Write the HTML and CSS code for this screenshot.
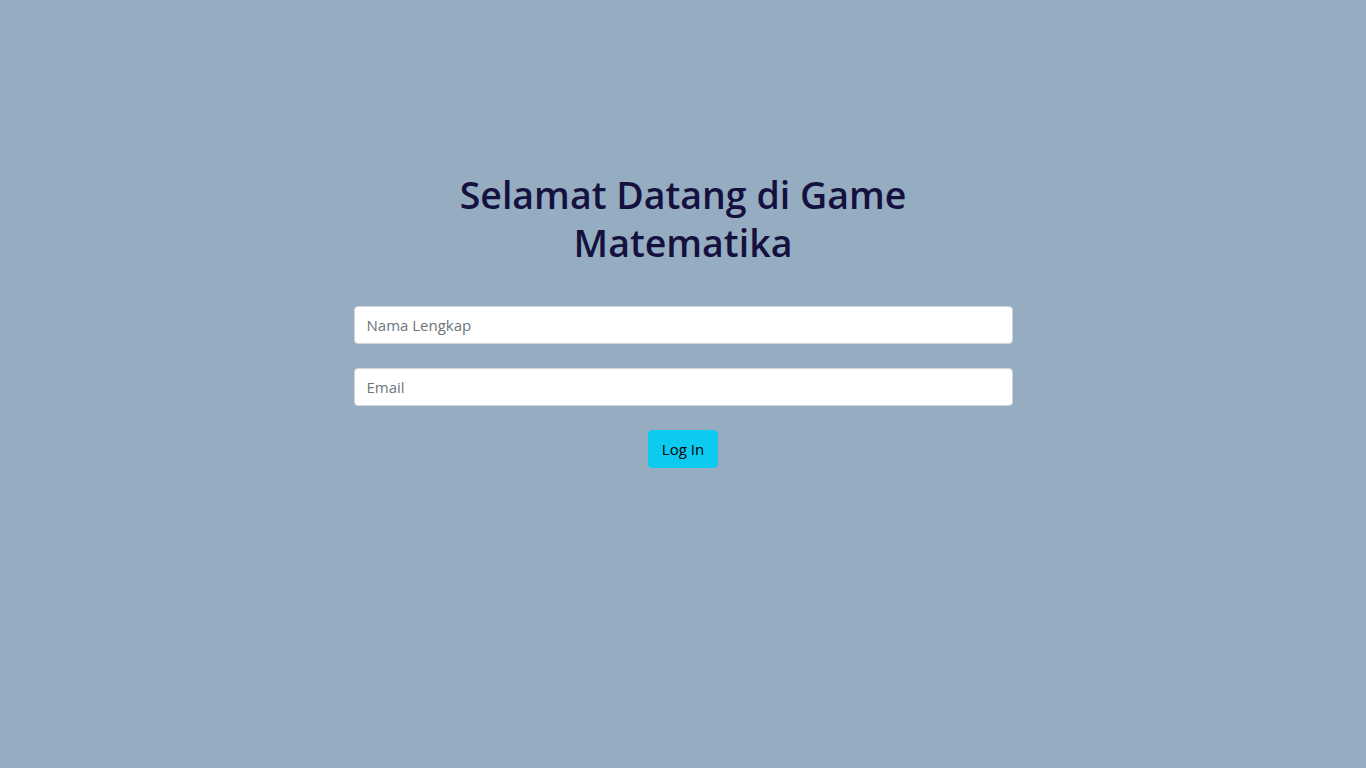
FILE: index.html
```html
<!DOCTYPE html>
<html lang="id">
<head>
<meta charset="utf-8">
<title>Game Matematika</title>
<link rel="stylesheet" href="styles.css">
</head>
<body>
<main class="page">
  <div class="panel">
    <h1 class="title">Selamat Datang di Game<br>Matematika</h1>
    <form class="form">
      <input class="field" type="text" placeholder="Nama Lengkap">
      <input class="field" type="email" placeholder="Email">
      <div class="actions">
        <button class="btn" type="button">Log In</button>
      </div>
    </form>
  </div>
</main>
</body>
</html>
```
FILE: styles.css
```css
* { box-sizing: border-box; }
html, body {
  margin: 0;
  height: 100%;
}
body {
  background: #96adc1;
  font-family: "Open Sans", "Noto Sans", sans-serif;
}
.page {
  display: flex;
  justify-content: center;
  padding-top: 171px;
}
.panel {
  width: 659px;
  display: flex;
  flex-direction: column;
  align-items: stretch;
}
.title {
  margin: 0 0 39px;
  text-align: center;
  font-size: 37.5px;
  font-weight: 600;
  line-height: 48px;
  color: #15113f;
}
.form {
  display: flex;
  flex-direction: column;
  gap: 24px;
}
.field {
  display: block;
  width: 100%;
  height: 38px;
  padding: 6px 12px;
  font-family: inherit;
  font-size: 15px;
  line-height: 24px;
  color: #212529;
  background: #fff;
  border: 1px solid #ced4da;
  border-radius: 4px;
  outline: none;
}
.field::placeholder { color: #6c757d; }
.actions {
  display: flex;
  justify-content: center;
}
.btn {
  height: 38px;
  padding: 6px 13px;
  font-family: inherit;
  font-size: 15px;
  line-height: 24px;
  color: #000;
  background: #0dcaf0;
  border: 1px solid #0dcaf0;
  border-radius: 4px;
  cursor: pointer;
}
```
